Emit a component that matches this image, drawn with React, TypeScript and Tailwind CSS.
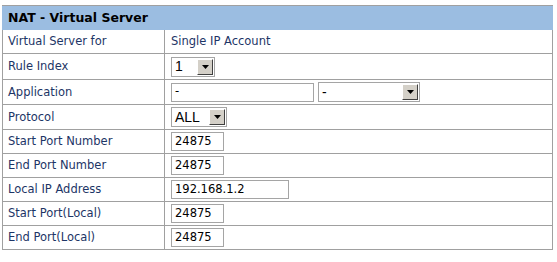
import React from "react";

const lbl = "text-[11.5px] text-[#1d3566]";

function Select({ w, text, big }: { w: number; text: string; big?: boolean }) {
  return (
    <div
      className="flex items-stretch border border-[#a5a5a5] bg-white h-[20px]"
      style={{ width: w }}
    >
      <div
        className={`flex-1 flex items-center pl-[3px] text-black ${big ? "text-[14px]" : "text-[14px]"}`}
        style={{ fontFamily: '"Liberation Sans", Arial, sans-serif' }}
      >
        {text}
      </div>
      <div className="m-[1px] w-[16px] flex items-center justify-center bg-[#d4d0c8] border-t border-l border-t-white border-l-white border-b border-r border-b-[#404040] border-r-[#404040]">
        <svg width="7" height="4" viewBox="0 0 7 4">
          <path d="M0 0H7L3.5 4Z" fill="#000" />
        </svg>
      </div>
    </div>
  );
}

function Input({ w, value }: { w: number; value: string }) {
  return (
    <div
      className="h-[19px] border border-[#a5a5a5] bg-white flex items-center pl-[3px] text-[11.5px] text-black"
      style={{ width: w }}
    >
      {value}
    </div>
  );
}

function Row({ h, label, children, last }: { h: number; label: string; children: React.ReactNode; last?: boolean }) {
  return (
    <div className={`flex ${last ? "" : "border-b border-[#a0a0a0]"}`} style={{ height: h }}>
      <div className={`w-[162px] border-r border-[#a0a0a0] flex items-center pl-[5px] pt-[1px] ${lbl}`}>{label}</div>
      <div className="flex-1 flex items-center pl-[6px] gap-[4px]">{children}</div>
    </div>
  );
}

export default function App() {
  return (
    <div
      className="bg-white w-[557px] h-[262px] pt-[5px] pl-[2px]"
      style={{ fontFamily: '"DejaVu Sans", Verdana, sans-serif' }}
    >
      <div className="w-[551px]">
        <div className="h-[25px] border-t border-[#a0a0a0] bg-[#9bbde1] flex items-center pl-[6px] text-[12.5px] font-bold text-black">
          NAT - Virtual Server
        </div>
        <div className="border border-[#a0a0a0] border-t-0">
          <Row h={24} label="Virtual Server for">
            <span className={lbl}>Single IP Account</span>
          </Row>
          <Row h={26} label="Rule Index">
            <Select w={44} text="1" />
          </Row>
          <Row h={25} label="Application">
            <Input w={143} value="-" />
            <Select w={102} text="-" />
          </Row>
          <Row h={25} label="Protocol">
            <Select w={56} text="ALL" big />
          </Row>
          <Row h={24} label="Start Port Number">
            <Input w={53} value="24875" />
          </Row>
          <Row h={24} label="End Port Number">
            <Input w={53} value="24875" />
          </Row>
          <Row h={24} label="Local IP Address">
            <Input w={118} value="192.168.1.2" />
          </Row>
          <Row h={24} label="Start Port(Local)">
            <Input w={53} value="24875" />
          </Row>
          <Row h={23} label="End Port(Local)" last>
            <Input w={53} value="24875" />
          </Row>
        </div>
      </div>
    </div>
  );
}
